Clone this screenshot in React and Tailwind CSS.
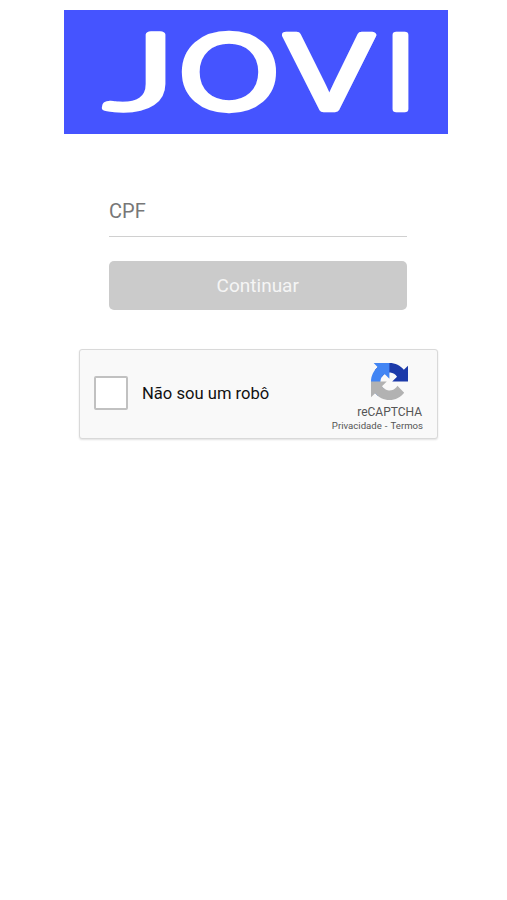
import { useState } from "react";

function JoviLogo() {
  return (
    <svg
      viewBox="0 0 384 124"
      className="block w-[384px] h-[124px] overflow-visible bg-[#4554ff]"
      role="img"
      aria-label="JOVI"
    >
      <g
        fill="#fff"
        stroke="#fff"
        strokeWidth="6.5"
        strokeLinejoin="round"
        fontFamily="Inter, sans-serif"
        fontSize="102"
        fontWeight="300"
      >
        <text
          transform="translate(41 98.5) scale(1.66 1)"
          fontFamily="Lato, sans-serif"
          fontSize="104.5"
        >
          J
        </text>
        <text transform="translate(113.5 98.5) scale(1.33 1)">O</text>
        <text transform="translate(218.5 98.5) scale(1.36 1)">V</text>
        <text transform="translate(321 98.5) scale(1.16 1)">I</text>
      </g>
    </svg>
  );
}

function RecaptchaIcon() {
  return (
    <svg viewBox="0 0 64 64" className="block w-[37px] h-[37px]">
      <path
        d="M64 31.955l-.033-1.37V4.687l-7.16 7.16C50.948 4.674 42.033.093 32.05.093c-10.4 0-19.622 4.96-25.458 12.64l11.736 11.86a15.55 15.55 0 0 1 4.754-5.334c2.05-1.6 4.952-2.906 8.968-2.906.485 0 .86.057 1.135.163 4.976.393 9.288 3.14 11.828 7.124l-8.307 8.307L64 31.953"
        fill="#1c3aa9"
      />
      <path
        d="M31.862.094l-1.37.033H4.594l7.16 7.16C4.58 13.147 0 22.06 0 32.046c0 10.4 4.96 19.622 12.64 25.458L24.5 45.768a15.55 15.55 0 0 1-5.334-4.754c-1.6-2.05-2.906-4.952-2.906-8.968 0-.485.057-.86.163-1.135.393-4.976 3.14-9.288 7.124-11.828l8.307 8.307L31.86.095"
        fill="#4285f4"
      />
      <path
        d="M.001 32.045l.033 1.37v25.898l7.16-7.16c5.86 7.173 14.774 11.754 24.76 11.754 10.4 0 19.622-4.96 25.458-12.64l-11.736-11.86a15.55 15.55 0 0 1-4.754 5.334c-2.05 1.6-4.952 2.906-8.968 2.906-.485 0-.86-.057-1.135-.163-4.976-.393-9.288-3.14-11.828-7.124l8.307-8.307c-10.522.04-22.4.066-27.295-.005"
        fill="#b2b2b2"
      />
    </svg>
  );
}

function Recaptcha({ checked, onChange }) {
  return (
    <div className="mt-[39px] ml-[79px] w-[359px] h-[90px] flex items-center rounded-[3px] border border-[#d9d9d9] bg-[#f9f9f9] shadow-[0_1px_2px_rgba(0,0,0,0.12)]">
      <input
        type="checkbox"
        id="robot"
        checked={checked}
        onChange={onChange}
        className="ml-[14px] mb-[3px] w-[34px] h-[34px] appearance-none rounded-[2px] border-2 border-[#c1c1c1] bg-white checked:bg-[#4285f4]"
      />
      <label
        htmlFor="robot"
        className="ml-[14px] text-[16.6px] leading-6 text-[#111]"
      >
        Não sou um robô
      </label>
      <div className="ml-auto self-start w-[92px] mt-[13px] mr-[14px] flex flex-col items-end text-[#555]">
        <div className="mr-[15px]">
          <RecaptchaIcon />
        </div>
        <p className="mt-[5px] mr-px text-[12px] leading-[14px]">reCAPTCHA</p>
        <p className="text-[9.6px] leading-[14px] whitespace-nowrap">
          <a href="#privacidade">Privacidade</a>
          <span className="mx-[0.7px]"> - </span>
          <a href="#termos">Termos</a>
        </p>
      </div>
    </div>
  );
}

export default function App() {
  const [cpf, setCpf] = useState("");
  const [checked, setChecked] = useState(false);

  return (
    <main className="min-h-screen bg-white pt-[10px] font-[Roboto,sans-serif]">
      <div className="ml-[63.5px]">
        <JoviLogo />
      </div>

      {/* Form */}
      <form
        className="mt-[52px] ml-[109px] w-[297.5px]"
        onSubmit={(e) => e.preventDefault()}
      >
        <input
          type="text"
          placeholder="CPF"
          value={cpf}
          onChange={(e) => setCpf(e.target.value)}
          className="block w-full h-[51px] border-b border-[#d0d0d0] text-[20px] text-[#333] outline-none placeholder:text-[#777]"
        />
        <button
          type="submit"
          disabled={!cpf || !checked}
          className="mt-[24px] block w-full h-[49px] rounded-[5px] bg-[#cbcbcb] pt-px text-[19px] text-[#f5f5f5]"
        >
          Continuar
        </button>
      </form>

      <Recaptcha checked={checked} onChange={() => setChecked(!checked)} />
    </main>
  );
}
